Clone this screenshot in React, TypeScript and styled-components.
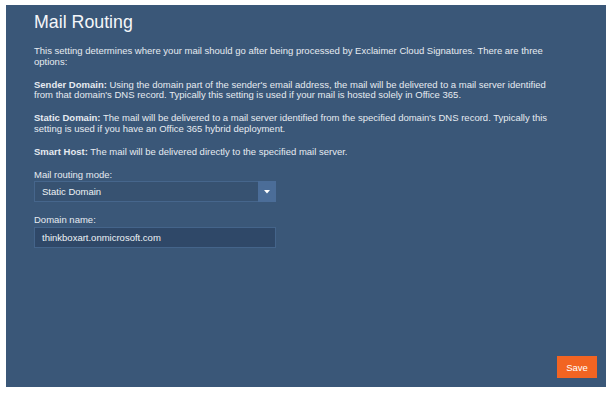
import React from "react";
import styled, { createGlobalStyle } from "styled-components";

const Global = createGlobalStyle`
  html, body { margin: 0; padding: 0; background: #ffffff; }
  body { font-family: "Liberation Sans", Arial, sans-serif; }
  * { box-sizing: border-box; }
`;

const Page = styled.div`
  padding: 5px 6px 8px 6px;
`;

const Panel = styled.section`
  width: 600px;
  height: 382px;
  background: #3a5778;
  display: flex;
  flex-direction: column;
  padding: 6px 9px 9px 28px;
  color: #e6ebf1;
`;

const Title = styled.h1`
  margin: 0 0 13px 0;
  font-size: 17.8px;
  font-weight: normal;
  line-height: 22px;
  color: #f4f6f9;
`;

const Paragraph = styled.p`
  margin: 0 0 12px 0;
  width: 516px;
  font-size: 9.5px;
  line-height: 10.8px;
`;

const Strong = styled.strong`
  font-weight: bold;
`;

const Field = styled.div<{ $top: number }>`
  display: flex;
  flex-direction: column;
  width: 242px;
  margin-top: ${(p) => p.$top}px;
`;

const Label = styled.label`
  font-size: 9.5px;
  line-height: 11px;
  margin-bottom: 1.5px;
`;

const SelectBox = styled.div`
  display: flex;
  height: 21px;
  background: #375271;
  border: 1px solid #46668c;
`;

const SelectValue = styled.div`
  flex: 1;
  display: flex;
  align-items: center;
  padding-left: 7px;
  font-size: 9.5px;
  color: #eef2f6;
`;

const Arrow = styled.div`
  width: 18px;
  margin: -1px -1px -1px 0;
  background: #4b6d98;
  display: flex;
  align-items: center;
  justify-content: center;
`;

const Input = styled.div`
  height: 21px;
  background: #2f4868;
  border: 1px solid #44648a;
  display: flex;
  align-items: center;
  padding-left: 7px;
  font-size: 9.5px;
  color: #eef2f6;
`;

const Footer = styled.div`
  margin-top: auto;
  display: flex;
  justify-content: flex-end;
`;

const SaveButton = styled.button`
  width: 40px;
  height: 22px;
  border: none;
  background: #f26422;
  color: #ffffff;
  font-family: "Liberation Sans", Arial, sans-serif;
  font-size: 9.5px;
  padding: 0;
`;

export default function App() {
  return (
    <>
      <Global />
      <Page>
        <Panel>
          <Title>Mail Routing</Title>
          <Paragraph>
            This setting determines where your mail should go after being processed by Exclaimer Cloud
            Signatures. There are three options:
          </Paragraph>
          <Paragraph>
            <Strong>Sender Domain:</Strong> Using the domain part of the sender's email address, the mail
            will be delivered to a mail server identified from that domain's DNS record. Typically this
            setting is used if your mail is hosted solely in Office 365.
          </Paragraph>
          <Paragraph>
            <Strong>Static Domain:</Strong> The mail will be delivered to a mail server identified from the
            specified domain's DNS record. Typically this setting is used if you have an Office 365 hybrid
            deployment.
          </Paragraph>
          <Paragraph>
            <Strong>Smart Host:</Strong> The mail will be delivered directly to the specified mail server.
          </Paragraph>
          <Field $top={-1}>
            <Label>Mail routing mode:</Label>
            <SelectBox>
              <SelectValue>Static Domain</SelectValue>
              <Arrow>
                <svg width="6" height="4" viewBox="0 0 6 4">
                  <path d="M0 0 L6 0 L3 3.5 Z" fill="#ffffff" />
                </svg>
              </Arrow>
            </SelectBox>
          </Field>
          <Field $top={12}>
            <Label>Domain name:</Label>
            <Input>thinkboxart.onmicrosoft.com</Input>
          </Field>
          <Footer>
            <SaveButton>Save</SaveButton>
          </Footer>
        </Panel>
      </Page>
    </>
  );
}
